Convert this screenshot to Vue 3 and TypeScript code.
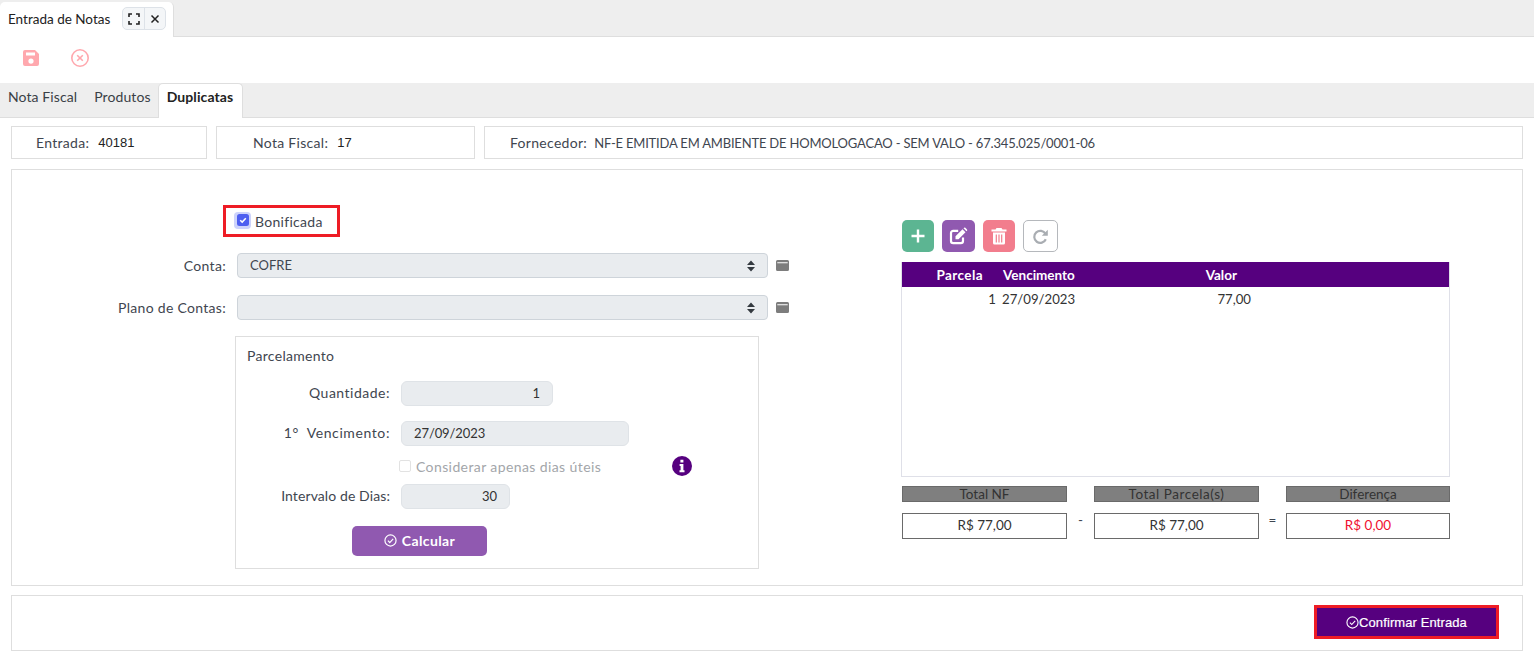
<script setup lang="ts">
import { ref } from 'vue';

const subTabs = ['Nota Fiscal', 'Produtos'];
const bonificada = ref(true);
const diasUteis = ref(false);

const totals = [
  { title: 'Total NF', value: 'R$ 77,00', sep: '-' },
  { title: 'Total Parcela(s)', value: 'R$ 77,00', sep: '=' },
  { title: 'Diferença', value: 'R$ 0,00', sep: '', danger: true },
];
</script>

<template>
  <div class="page">
    <div class="window-tabs">
      <div class="window-tab">
        <span>Entrada de Notas</span>
        <div class="tab-actions">
          <button class="tab-action" type="button">
            <svg width="12" height="12" viewBox="0 0 12 12" fill="none" stroke="#222" stroke-width="1.6">
              <path d="M1 4V1h3M8 1h3v3M11 8v3H8M4 11H1V8" />
            </svg>
          </button>
          <button class="tab-action" type="button">
            <svg width="10" height="10" viewBox="0 0 10 10" fill="none" stroke="#222" stroke-width="1.5">
              <path d="M1.5 1.5l7 7M8.5 1.5l-7 7" />
            </svg>
          </button>
        </div>
      </div>
    </div>

    <div class="toolbar">
      <svg width="18" height="18" viewBox="0 0 18 18">
        <path fill="#ffa8ae" fill-rule="evenodd" d="M3 1h10l4 4v10a2 2 0 0 1-2 2H3a2 2 0 0 1-2-2V3a2 2 0 0 1 2-2zm1 2.5v3h9v-3zM9 9.5a2.6 2.6 0 1 0 0 5.2 2.6 2.6 0 0 0 0-5.2z" />
      </svg>
      <svg width="20" height="20" viewBox="0 0 20 20" fill="none" stroke="#ffa8ae">
        <circle cx="10" cy="10" r="8.2" stroke-width="1.6" />
        <path d="M7.2 7.2l5.6 5.6M12.800 7.200l-5.600 5.600" stroke-width="1.6" />
      </svg>
    </div>

    <div class="sub-tabs">
      <span v-for="tab in subTabs" :key="tab" class="sub-tab">{{ tab }}</span>
      <span class="sub-tab sub-tab--active">Duplicatas</span>
    </div>

    <div class="info-row">
      <div class="info-box info-box--entrada">
        <span class="info-label">Entrada:</span><span class="info-num">40181</span>
      </div>
      <div class="info-box info-box--nota">
        <span class="info-label">Nota Fiscal:</span><span class="info-num">17</span>
      </div>
      <div class="info-box info-box--fornecedor">
        <span class="info-label">Fornecedor:</span>
        <span class="info-value">NF-E EMITIDA EM AMBIENTE DE HOMOLOGACAO - SEM VALO - 67.345.025/0001-06</span>
      </div>
    </div>

    <div class="panel main-panel">
      <div class="left-col">
        <label class="bonificada">
          <span class="check-halo">
            <input v-model="bonificada" class="check-hidden" type="checkbox" />
            <svg width="12" height="12" viewBox="0 0 12 12">
              <rect width="12" height="12" rx="2.5" fill="#4e5ff0" />
              <path d="M3.200 6.200l2 1.900 3.600-3.800" fill="none" stroke="#fff" stroke-width="1.500" />
            </svg>
          </span>
          Bonificada
        </label>

        <div class="select-row">
          <span class="select-label">Conta:</span>
          <div class="fake-select">
            <span>COFRE</span>
            <svg class="caret" width="10" height="14" viewBox="0 0 10 14" fill="#343a40">
              <path d="M5 1.500L9 6H1zM5 12.500L1 8h8z" />
            </svg>
          </div>
          <svg class="side-icon" width="13" height="11" viewBox="0 0 13 11">
            <path fill="#7d7d7d" fill-rule="evenodd" d="M1.500 0h10A1.500 1.500 0 0 1 13 1.500v8a1.500 1.500 0 0 1-1.500 1.500h-10A1.500 1.500 0 0 1 0 9.500v-8A1.500 1.500 0 0 1 1.500 0zM1.300 2.200v1h10.400v-1z" />
          </svg>
        </div>

        <div class="select-row">
          <span class="select-label">Plano de Contas:</span>
          <div class="fake-select">
            <span></span>
            <svg class="caret" width="10" height="14" viewBox="0 0 10 14" fill="#343a40">
              <path d="M5 1.500L9 6H1zM5 12.500L1 8h8z" />
            </svg>
          </div>
          <svg class="side-icon" width="13" height="11" viewBox="0 0 13 11">
            <path fill="#7d7d7d" fill-rule="evenodd" d="M1.500 0h10A1.500 1.500 0 0 1 13 1.500v8a1.500 1.500 0 0 1-1.500 1.500h-10A1.500 1.500 0 0 1 0 9.500v-8A1.500 1.500 0 0 1 1.500 0zM1.300 2.200v1h10.400v-1z" />
          </svg>
        </div>

        <fieldset class="parcelamento">
          <div class="parc-title">Parcelamento</div>

          <div class="parc-row parc-row--qtd">
            <span class="parc-label">Quantidade:</span>
            <div class="field field--qtd">1</div>
          </div>
          <div class="parc-row parc-row--venc">
            <span class="parc-label">1°&nbsp; Vencimento:</span>
            <div class="field field--date">27/09/2023</div>
          </div>
          <div class="uteis-row">
            <label class="uteis">
              <input v-model="diasUteis" class="check-hidden" type="checkbox" disabled />
              <span class="check-off"></span>
              Considerar apenas dias úteis
            </label>
            <svg class="info-icon" width="20" height="20" viewBox="0 0 20 20">
              <circle cx="10" cy="10" r="10" fill="#56007f" />
              <path fill="#fff" d="M8.400 3.800h3v2.600h-3zM7.600 8h3.800v6.200h1.100v2H7.500v-2h1.100V10H7.600z" />
            </svg>
          </div>
          <div class="parc-row parc-row--int">
            <span class="parc-label">Intervalo de Dias:</span>
            <div class="field field--int">30</div>
          </div>
          <button class="calc-btn" type="button">
            <svg width="13" height="13" viewBox="0 0 14 14" fill="none" stroke="#fff" stroke-width="1.300">
              <circle cx="7" cy="7" r="6" />
              <path d="M4.200 7.200l2 2 3.700-3.900" />
            </svg>
            Calcular
          </button>
        </fieldset>
      </div>

      <div class="right-col">
        <div class="grid-actions">
          <button class="act act--add" type="button">
            <svg width="16" height="16" viewBox="0 0 16 16" stroke="#fff" stroke-width="2.400">
              <path d="M8 1.500v13M1.500 8h13" />
            </svg>
          </button>
          <button class="act act--edit" type="button">
            <svg width="19" height="18" viewBox="0 0 19 18">
              <path fill="none" stroke="#fff" stroke-width="2.200" d="M14 10.500V14a2.200 2.200 0 0 1-2.200 2.200H4.200A2.200 2.200 0 0 1 2 14V6a2.200 2.200 0 0 1 2.200-2.200h5" />
              <path fill="#fff" d="M6.500 9.300L13.500 2.300l3 3-7 7H6.500zM14.500 1.300l.6-.5a1 1 0 0 1 1.300 0l1.600 1.600a1 1 0 0 1 0 1.300l-.5.600z" />
            </svg>
          </button>
          <button class="act act--del" type="button">
            <svg width="16" height="18" viewBox="0 0 16 18">
              <path fill="#fff" fill-rule="evenodd" d="M5.500 1h5l1 1.600H15.500v1.800H.5V2.600h4zM2 5.500h12V16a1.500 1.500 0 0 1-1.500 1.500h-9A1.500 1.500 0 0 1 2 16zM4.700 7.500v8h1.200v-8zM7.400 7.500v8h1.200v-8zM10.100 7.500v8h1.200v-8z" />
            </svg>
          </button>
          <button class="act act--reload" type="button">
            <svg width="17" height="17" viewBox="0 0 17 17" fill="none" stroke="#a9adb2" stroke-width="2.200">
              <path d="M13.800 11.200a6 6 0 1 1-.3-5.300" />
              <path fill="#a9adb2" stroke="none" d="M15.800 1.800v6h-6z" />
            </svg>
          </button>
        </div>

        <div class="grid">
          <div class="grid-head">
            <span class="cell-parcela">Parcela</span>
            <span class="cell-venc">Vencimento</span>
            <span class="cell-valor">Valor</span>
          </div>
          <div class="grid-row">
            <span class="cell-parcela">1</span>
            <span class="cell-venc">27/09/2023</span>
            <span class="cell-valor">77,00</span>
          </div>
        </div>

        <div class="totals">
          <template v-for="t in totals" :key="t.title">
            <div class="total">
              <div class="total-title">{{ t.title }}</div>
              <div class="total-value" :class="{ 'total-value--danger': t.danger }">{{ t.value }}</div>
            </div>
            <span v-if="t.sep" class="total-sep">{{ t.sep }}</span>
          </template>
        </div>
      </div>
    </div>

    <div class="panel footer-panel">
      <div class="confirm-outline">
        <button class="confirm-btn" type="button">
          <svg width="13" height="13" viewBox="0 0 14 14" fill="none" stroke="#fff" stroke-width="1.200">
            <circle cx="7" cy="7" r="6" />
            <path d="M4.200 7.200l2 2 3.700-3.900" />
          </svg>Confirmar Entrada
        </button>
      </div>
    </div>
  </div>
</template>

<style>
html,
body {
  margin: 0;
  background: #fff;
}
</style>

<style scoped>
.page {
  width: 1534px;
  height: 661px;
  overflow: hidden;
  background: #fff;
  color: #3f4650;
  font-family: Lato, "Open Sans", sans-serif;
  font-size: 14px;
  letter-spacing: 0.3px;
}

.window-tabs {
  height: 37px;
  box-sizing: border-box;
  background: #eee;
  border-bottom: 1px solid #dedede;
  padding-top: 2px;
}

.window-tab {
  width: 174px;
  height: 35px;
  box-sizing: border-box;
  display: flex;
  align-items: center;
  padding: 0 0 2px 8px;
  gap: 12px;
  background: #fff;
  border-radius: 5px 5px 0 0;
  border-right: 1px solid #dedede;
  color: #222;
  font-size: 13.5px;
  letter-spacing: 0;
}

.tab-actions {
  display: flex;
  height: 23px;
  box-sizing: border-box;
  border: 1px solid #dde2e8;
  border-radius: 5px;
  background: #f4f6f8;
}

.tab-action {
  width: 21px;
  padding: 0;
  border: 0;
  background: none;
  display: flex;
  align-items: center;
  justify-content: center;
}

.tab-action + .tab-action {
  border-left: 1px solid #dde2e8;
}

.toolbar {
  height: 46px;
  display: flex;
  align-items: center;
  gap: 30px;
  padding: 0 0 4px 22px;
  box-sizing: border-box;
}

.sub-tabs {
  height: 35px;
  box-sizing: border-box;
  background: #eee;
  border-bottom: 1px solid #dedede;
  display: flex;
  padding-left: 8px;
}

.sub-tab {
  margin-right: 17px;
  padding-top: 5px;
  color: #3a3f46;
  letter-spacing: 0.1px;
}

.sub-tab--active {
  margin: 0 0 -1px -10px;
  padding: 4px 8px 0;
  width: 67px;
  background: #fff;
  border: 1px solid #dedede;
  border-bottom: 0;
  border-radius: 5px 5px 0 0;
  font-weight: 700;
  color: #222;
}

.info-row {
  display: flex;
  gap: 9px;
  margin: 8px 11px 10px;
}

.info-box {
  height: 33px;
  box-sizing: border-box;
  border: 1px solid #dedede;
  display: flex;
  align-items: center;
}

.info-box--entrada {
  width: 196px;
  padding-left: 24px;
}

.info-box--nota {
  width: 259px;
  padding-left: 36px;
}

.info-box--fornecedor {
  flex: 1;
  padding-left: 25px;
}

.info-label {
  margin-right: 8px;
}

.info-value {
  margin-left: -1px;
  font-size: 13px;
  letter-spacing: -0.19px;
}

.info-num {
  font-family: "Liberation Sans", sans-serif;
  font-size: 13px;
  letter-spacing: 0;
  margin-left: 1px;
  color: #222;
}

.panel {
  margin: 0 11px;
  border: 1px solid #dedede;
}

.main-panel {
  height: 417px;
  box-sizing: border-box;
  display: flex;
}

.left-col {
  width: 889px;
  padding-top: 35px;
}

.bonificada {
  width: 117px;
  height: 32px;
  box-sizing: border-box;
  margin-left: 211px;
  border: 3px solid #ee1c25;
  display: flex;
  align-items: center;
  gap: 4px;
  padding-left: 8px;
}

.check-halo {
  width: 17px;
  height: 17px;
  border-radius: 4px;
  background: #cdd3fb;
  display: flex;
  align-items: center;
  justify-content: center;
  margin-top: -2px;
}

.check-hidden {
  display: none;
}

.select-row {
  display: flex;
  align-items: center;
  height: 25px;
  margin-top: 17px;
}

.bonificada + .select-row {
  margin-top: 16px;
}

.select-label {
  width: 214px;
  text-align: right;
  margin-right: 11px;
  margin-top: -1px;
}

.fake-select {
  position: relative;
  width: 531px;
  height: 25px;
  box-sizing: border-box;
  border: 1px solid #ced4da;
  border-radius: 4px;
  background: #e9ecef;
  padding-left: 12px;
  line-height: 23px;
  font-size: 13px;
  letter-spacing: 0;
}

.caret {
  position: absolute;
  right: 11px;
  top: 5px;
}

.side-icon {
  margin-left: 8px;
}

.parcelamento {
  width: 524px;
  height: 233px;
  box-sizing: border-box;
  margin: 16px 0 0 223px;
  padding: 0;
  border: 1px solid #dedede;
}

.parc-title {
  margin: 10px 0 0 11px;
  height: 18px;
  line-height: 18px;
}

.parc-row {
  display: flex;
  align-items: center;
  margin-top: 16px;
  height: 25px;
}

.parc-row--venc {
  margin-top: 15px;
}

.parc-row--int {
  margin-top: 8px;
}

.parc-label {
  width: 154px;
  text-align: right;
  margin-right: 11px;
  margin-top: -2px;
}

.parc-row--qtd .parc-label {
  letter-spacing: 0.5px;
}

.parc-row--venc .parc-label {
  letter-spacing: 0.6px;
}

.parc-row--int .parc-label {
  letter-spacing: 0.1px;
}

.field {
  height: 25px;
  box-sizing: border-box;
  border: 1px solid #dfe3e7;
  border-radius: 6px;
  background: #e9ecef;
  line-height: 23px;
  padding: 0 12px;
  color: #333;
  font-size: 13px;
  letter-spacing: -0.1px;
}

.field--qtd {
  width: 152px;
  text-align: right;
}

.field--date {
  width: 228px;
}

.field--int {
  width: 109px;
  text-align: right;
}

.uteis-row {
  display: flex;
  align-items: center;
  height: 20px;
  margin: 10px 0 0 163px;
}

.uteis {
  width: 273px;
  display: flex;
  align-items: center;
  gap: 5px;
  color: #a3a6aa;
  letter-spacing: 0.4px;
}

.check-off {
  width: 10px;
  height: 10px;
  flex: none;
  border: 1px solid #e2e2e2;
  border-radius: 2px;
}

.calc-btn {
  display: flex;
  align-items: center;
  justify-content: center;
  gap: 5px;
  width: 135px;
  height: 30px;
  margin: 17px 0 0 116px;
  padding: 0 0 1px;
  border: 0;
  border-radius: 5px;
  background: #9059b0;
  color: #fff;
  font: 700 14px Lato, sans-serif;
  letter-spacing: 0.4px;
}

.right-col {
  width: 549px;
  padding-top: 50px;
}

.grid-actions {
  display: flex;
  gap: 8px;
  margin-left: 1px;
}

.act {
  width: 32px;
  height: 32px;
  padding: 0;
  border: 0;
  border-radius: 5px;
  display: flex;
  align-items: center;
  justify-content: center;
}

.act--add {
  background: #5cb592;
}

.act--edit {
  width: 33px;
  background: #9059b0;
}

.act--del {
  background: #f27d8d;
}

.act--reload {
  width: 35px;
  box-sizing: border-box;
  background: #fff;
  border: 1px solid #b5b8bc;
}

.grid {
  margin-top: 10px;
  height: 215px;
  box-sizing: border-box;
  border: 1px solid #dfe0e8;
  border-top: 0;
  font-size: 13.5px;
  letter-spacing: 0;
}

.grid-head,
.grid-row {
  display: flex;
}

.grid-head {
  height: 25px;
  align-items: center;
  background: #56007f;
  color: #fff;
  font-weight: 700;
}

.grid-head .cell-parcela {
  letter-spacing: 0.4px;
}

.grid-row {
  height: 24px;
  align-items: center;
  color: #333;
  font-size: 13.2px;
}

.cell-parcela {
  width: 81px;
  text-align: right;
}

.cell-venc {
  width: 202px;
  padding-left: 20px;
  box-sizing: border-box;
}

.grid-row .cell-parcela {
  width: 94px;
}

.grid-row .cell-venc {
  width: 189px;
  padding-left: 6px;
}

.cell-valor {
  width: 52px;
  text-align: right;
}

.grid-row .cell-valor {
  width: 67px;
  margin-left: -1px;
}

.totals {
  display: flex;
  margin: 9px 0 0 1px;
  font-size: 13.5px;
  letter-spacing: 0;
}

.total {
  width: 165px;
}

.total:last-child {
  width: 164px;
}

.total-title {
  height: 16px;
  box-sizing: border-box;
  background: #7f7f7f;
  border: 1px solid #6a6a6a;
  text-align: center;
  line-height: 15px;
  color: #333;
}

.total:nth-child(3) .total-title {
  letter-spacing: 0.55px;
}

.total-value {
  height: 26px;
  box-sizing: border-box;
  margin-top: 11px;
  border: 1px solid #6a6a6a;
  text-align: center;
  line-height: 23px;
  color: #333;
}

.total-value--danger {
  color: #f01030;
}

.total-sep {
  width: 27px;
  text-align: center;
  padding-top: 24px;
  line-height: 20px;
  box-sizing: border-box;
}

.footer-panel {
  margin-top: 9px;
  height: 56px;
  box-sizing: border-box;
  display: flex;
  justify-content: flex-end;
  padding: 9px 23px 0 0;
}

.confirm-outline {
  height: 34px;
  box-sizing: border-box;
  border: 3px solid #ee1c25;
}

.confirm-btn {
  width: 179px;
  height: 28px;
  padding: 0;
  border: 0;
  display: flex;
  align-items: center;
  justify-content: center;
  background: #56007f;
  color: #fff;
  font: 400 13px "Liberation Sans", sans-serif;
  letter-spacing: 0.1px;
  -webkit-text-stroke: 0.2px #fff;
}
</style>
